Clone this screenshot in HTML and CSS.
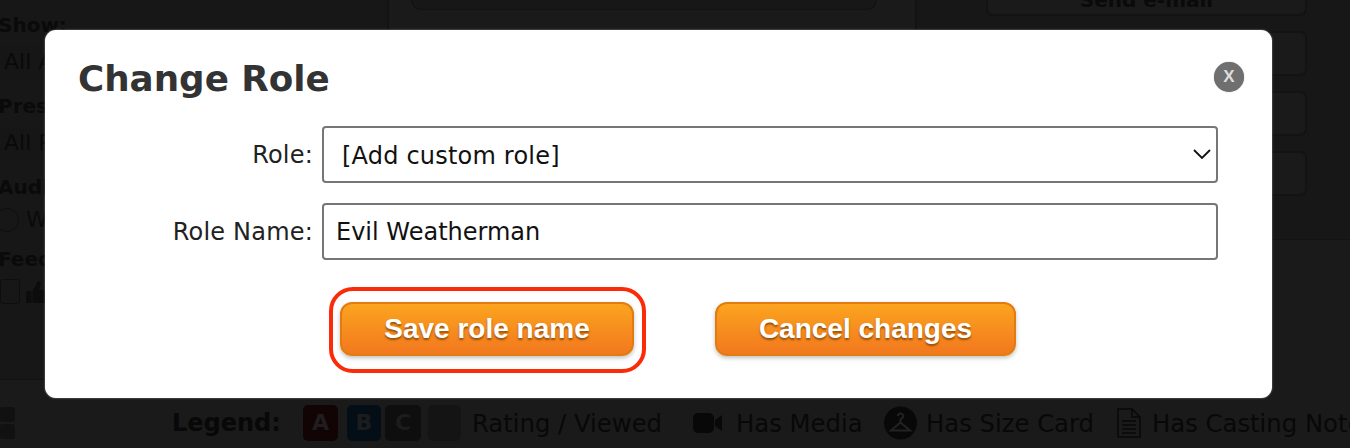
FILE: index.html
```html
<!DOCTYPE html>
<html lang="en">
<head>
  <meta charset="UTF-8">
  <title>Change Role</title>
  <link rel="stylesheet" href="styles.css">
</head>
<body>
  <div class="page">
    <div class="top">
      <aside class="filters">
        <label class="f-label f-show">Show:</label>
        <div class="f-select">All Auditions</div>
        <label class="f-label">Presets:</label>
        <div class="f-select">All Presets</div>
        <label class="f-label">Audition:</label>
        <div class="f-radio"><span class="radio"></span>With</div>
        <label class="f-label">Feedback:</label>
        <div class="f-check">
          <span class="check"></span>
          <svg class="thumb" width="24" height="24" viewBox="0 0 22 22"><path fill="#0c0c0c" d="M0 10h5v11H0zM6 10l5-9c2 0 3 2 2 5l-1 3h8c2 0 2 2 1 3l-2 8c0 1-1 1-2 1H6z"/></svg>
        </div>
      </aside>
      <main class="center">
        <div class="center-card"></div>
      </main>
      <aside class="actions">
        <div class="actions-list">
          <div class="act act-first"><span>Send e-mail</span></div>
          <div class="act"></div>
          <div class="act"></div>
          <div class="act"></div>
        </div>
      </aside>
    </div>
    <div class="legend">
      <div class="pager"><span></span><span></span></div>
      <strong class="legend-title">Legend:</strong>
      <span class="badge badge-a">A</span>
      <span class="badge badge-b">B</span>
      <span class="badge badge-c">C</span>
      <span class="badge badge-none"></span>
      <span class="legend-text t-rating">Rating / Viewed</span>
      <svg class="i-video" width="30" height="22" viewBox="0 0 30 22"><rect x="0" y="1" width="21" height="20" rx="5" fill="#080808"/><path fill="#080808" d="M22 8l7-5v16l-7-5z"/></svg>
      <span class="legend-text t-media">Has Media</span>
      <svg class="i-size" width="33" height="34" viewBox="0 0 33 34"><circle cx="16.5" cy="17" r="16.5" fill="#080808"/><path fill="none" stroke="#222" stroke-width="2" d="M14 10a2.6 2.6 0 1 1 3.6 2.4L16.500 13.500v3L26 24.500H7l9.500-8"/></svg>
      <span class="legend-text t-size">Has Size Card</span>
      <svg class="i-doc" width="24" height="30" viewBox="0 0 24 30"><path fill="none" stroke="#080808" stroke-width="1.500" d="M1 1h14l8 8v20H1zM15 1v8h8M5 13h14M5 17h14M5 21h14M5 25h14"/></svg>
      <span class="legend-text t-notes">Has Casting Notes</span>
    </div>
  </div>

  <div class="modal">
    <div class="modal-head">
      <h1>Change Role</h1>
      <button class="close">X</button>
    </div>
    <form class="role-form">
      <label for="role">Role:</label>
      <div class="select-wrap">
        <select id="role"><option>[Add custom role]</option></select>
        <svg class="chevron" width="18" height="10" viewBox="0 0 18 10"><path fill="none" stroke="#111" stroke-width="1.800" d="M1 1l8 8 8-8"/></svg>
      </div>
      <label for="rolename">Role Name:</label>
      <input id="rolename" type="text" value="Evil Weatherman">
    </form>
    <div class="modal-btns">
      <div class="btn-save-wrap">
        <button class="btn btn-save">Save role name</button>
        <span class="ring"></span>
      </div>
      <button class="btn btn-cancel">Cancel changes</button>
    </div>
  </div>
</body>
</html>
```

FILE: styles.css
```css
* { box-sizing: border-box; }
html, body { margin: 0; padding: 0; height: 448px; overflow: hidden; }
body { position: relative; background: #1a1a1a; color: #0a0a0a; font-family: "DejaVu Sans", sans-serif; }

.page { height: 448px; display: flex; flex-direction: column; }
.top { display: grid; grid-template-columns: 389px 526px 1fr; height: 380px; }

/* left filters, mostly behind the modal */
.filters { background: #171717; border-right: 2px solid #121212; padding: 13px 0 0 0; margin-left: -2px; height: 380px; border-bottom: 1px solid #121212; }
.f-label { display: block; font-weight: bold; font-size: 20px; line-height: 25px; color: #0a0a0a; }
.f-select { height: 34px; margin-top: 8px; margin-bottom: 14px; padding-left: 6px; font-size: 22px; line-height: 32px; background: #161616; }
.f-radio { display: flex; align-items: center; gap: 7px; font-size: 22px; margin-top: 7px; margin-bottom: 15px; }
.radio { width: 24px; height: 24px; border: 1px solid #0e0e0e; border-radius: 50%; margin-left: -3px; }
.f-check { display: flex; align-items: center; gap: 6px; margin-top: 7px; }
.check { width: 20px; height: 25px; margin-left: 2px; border: 1px solid #0e0e0e; border-radius: 3px; }

.center { background: #1a1a1a; padding: 0 38px 0 22px; }
.center-card { height: 10px; background: #171717; border: 1px solid #121212; border-top: 0; border-radius: 0 0 14px 14px; }

.actions { height: 240px; background: #171717; border-left: 2px solid #121212; padding-left: 69px; padding-right: 43px; border-bottom: 1px solid #131313; }
.actions-list { display: flex; flex-direction: column; gap: 15px; }
.act { height: 45px; background: #1a1a1a; border: 2px solid #131313; border-radius: 7px; text-align: center; font-weight: bold; font-size: 20px; }
.act-first { height: 16px; border-top: 0; border-radius: 0 0 7px 7px; overflow: hidden; line-height: 0; }

/* legend strip */
.legend { display: flex; align-items: center; height: 35px; margin-top: 25px; font-size: 24.3px; color: #080808; }
.legend > * { flex-shrink: 0; }
.pager { display: flex; flex-direction: column; gap: 2px; width: 172px; }
.pager span { width: 15px; height: 15px; background: #111; border-radius: 3px; }
.legend-title { font-size: 24px; width: 131px; }
.badge { width: 35px; height: 36px; margin-right: 9px; border-radius: 5px; background: #111; text-align: center; font-weight: bold; font-size: 22px; line-height: 35px; color: #1c1c1c; }
.badge-a { background: #120404; color: #1e1e1e; }
.badge-b { width: 34px; background: #040e16; margin-right: 4px; }
.badge-c { width: 36px; background: #0e0e0e; margin-right: 7px; }
.badge-none { width: 33px; background: #141414; margin-right: 11px; }
.legend-text { white-space: nowrap; padding-top: 2px; }
.t-rating { width: 221px; }
.i-video { margin-right: 13px; }
.t-media { width: 148px; }
.i-size { margin-right: 9px; }
.t-size { width: 191px; }
.i-doc { margin-right: 11px; }

/* dialog */
.modal { position: absolute; left: 45px; top: 30px; width: 1227px; height: 368px; background: #fff; border-radius: 11px; box-shadow: 0 0 2px #999; padding: 26px 28px 0 33px; }
.modal-head { display: flex; justify-content: space-between; align-items: flex-start; }
.modal-head h1 { margin: 0; font-size: 35.700px; line-height: 46px; font-weight: bold; color: #333; }
.close { width: 30px; height: 30px; margin-top: 6px; padding: 0; border: 0; border-radius: 50%; background: #6f6f6f; box-shadow: 0 0 1px #777; color: #ddd; font-family: "Liberation Sans", sans-serif; font-weight: bold; font-size: 17px; line-height: 30px; }

.role-form { display: grid; grid-template-columns: 235px 896px; column-gap: 9px; row-gap: 20px; align-items: center; margin-top: 24px; font-size: 24px; color: #222; }
.role-form label { text-align: right; letter-spacing: 0.2px; padding-top: 1px; }
.select-wrap { position: relative; }
.role-form select, .role-form input { display: block; width: 100%; height: 57px; background: #fff; border: 2px solid #767676; border-radius: 4px; font-family: "DejaVu Sans", sans-serif; font-size: 24px; color: #111; padding-top: 2px; }
.role-form select { appearance: none; padding-left: 18px; letter-spacing: 0.2px; }
.role-form input { padding-left: 12px; }
.chevron { position: absolute; right: 7px; top: 23px; }

.modal-btns { display: flex; margin-top: 42px; margin-left: 262px; gap: 81px; }
.btn-save-wrap { position: relative; }
.btn { display: block; height: 54px; padding: 0; border: 2px solid #e07c10; border-radius: 12px; background: linear-gradient(#fba41f, #f2781e); color: #fff; font-family: "Liberation Sans", sans-serif; font-weight: bold; font-size: 28px; text-shadow: 0 2px 2px rgba(110, 55, 0, 0.7); box-shadow: 0 2px 4px rgba(0, 0, 0, 0.25); }
.btn-save { width: 294px; }
.btn-cancel { width: 301px; }
.ring { position: absolute; left: -11px; top: -15px; width: 317px; height: 86px; border: 4px solid #fb2b0a; border-radius: 24px; }
```
